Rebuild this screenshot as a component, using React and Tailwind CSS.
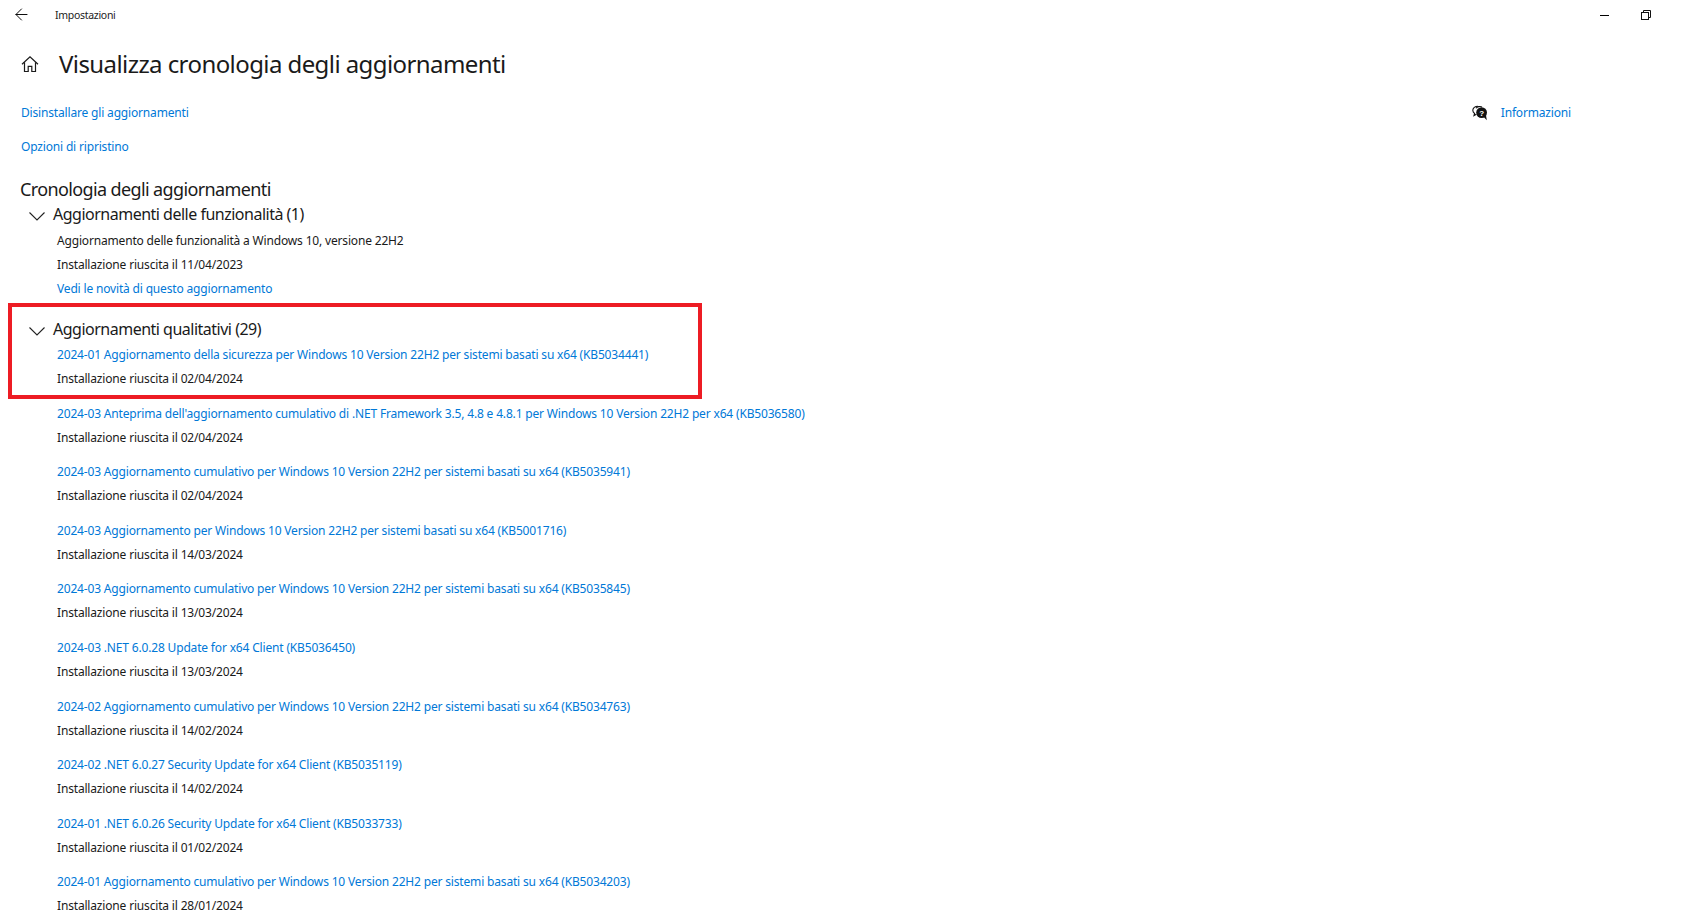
import { ArrowLeft } from "lucide-react";

const updates = [
  ["2024-01 Aggiornamento della sicurezza per Windows 10 Version 22H2 per sistemi basati su x64 (KB5034441)", "02/04/2024"],
  ["2024-03 Anteprima dell'aggiornamento cumulativo di .NET Framework 3.5, 4.8 e 4.8.1 per Windows 10 Version 22H2 per x64 (KB5036580)", "02/04/2024"],
  ["2024-03 Aggiornamento cumulativo per Windows 10 Version 22H2 per sistemi basati su x64 (KB5035941)", "02/04/2024"],
  ["2024-03 Aggiornamento per Windows 10 Version 22H2 per sistemi basati su x64 (KB5001716)", "14/03/2024"],
  ["2024-03 Aggiornamento cumulativo per Windows 10 Version 22H2 per sistemi basati su x64 (KB5035845)", "13/03/2024"],
  ["2024-03 .NET 6.0.28 Update for x64 Client (KB5036450)", "13/03/2024"],
  ["2024-02 Aggiornamento cumulativo per Windows 10 Version 22H2 per sistemi basati su x64 (KB5034763)", "14/02/2024"],
  ["2024-02 .NET 6.0.27 Security Update for x64 Client (KB5035119)", "14/02/2024"],
  ["2024-01 .NET 6.0.26 Security Update for x64 Client (KB5033733)", "01/02/2024"],
  ["2024-01 Aggiornamento cumulativo per Windows 10 Version 22H2 per sistemi basati su x64 (KB5034203)", "28/01/2024"],
];

function HomeIcon() {
  return (
    <svg width="18" height="18" viewBox="0 0 18 18" fill="none" stroke="#1a1a1a" strokeWidth="1.2">
      <path d="M1 9.2 9 1.8l8 7.4" />
      <path d="M3.5 7.2V16.5h3.7v-5.2h3.6v5.2h3.7V7.2" />
    </svg>
  );
}

function ChatHelpIcon() {
  return (
    <svg width="16" height="16" viewBox="0 0 16 16">
      <path d="M6 1.2C3 1.2.8 3 .8 5.3c0 1.3.7 2.4 1.8 3.2L2 10.6l2.4-1.4" fill="none" stroke="#111" strokeWidth="1.1" />
      <path d="M4 3.2C5 1.8 8 .8 10 2" fill="none" stroke="#111" strokeWidth="1.1" />
      <circle cx="9.6" cy="7.6" r="5.4" fill="#111" />
      <path d="m11.5 11.8 3.3 3.4-.8-5z" fill="#111" />
      <text x="9.6" y="10.6" textAnchor="middle" fontSize="8" fontWeight="700" fill="#fff" fontFamily="Liberation Sans, sans-serif">?</text>
    </svg>
  );
}

function RestoreIcon() {
  return (
    <svg width="10" height="10" viewBox="0 0 10 10" fill="none" stroke="#111" strokeWidth="1">
      <rect x="0.5" y="2.5" width="7" height="7" />
      <path d="M2.5 2.5v-2h7v7h-2" />
    </svg>
  );
}

function Chevron() {
  return (
    <svg width="16" height="9" viewBox="0 0 16 9" fill="none" stroke="#222" strokeWidth="1.1" className="mt-[4px] mr-[8px]">
      <path d="M.5.5 8 8l7.500-7.500" />
    </svg>
  );
}

function GroupHeader({ children, className }) {
  return (
    <div className={`flex items-center h-6 pl-[29px] ${className}`}>
      <Chevron />
      <span className="text-[16px] tracking-[-0.5px] text-[#1a1a1a]">{children}</span>
    </div>
  );
}

export default function App() {
  return (
    <div className="relative h-[919px] overflow-hidden bg-white text-black font-['Noto_Sans',sans-serif]">
      {/* Title bar */}
      <div className="flex items-center h-[30px] pl-[12px] pr-[32px]">
        <ArrowLeft className="w-[19px] h-[19px] mb-[2px] text-black" strokeWidth={1.2} />
        <span className="ml-[24px] mt-[1px] text-[10.500px] tracking-[-0.3px] text-[#222]">Impostazioni</span>
        <div className="ml-auto flex items-center gap-[32px]">
          <div className="w-[9px] h-px bg-black" />
          <RestoreIcon />
        </div>
      </div>

      {/* Page heading */}
      <div className="flex items-center h-[36px] mt-[16px] pl-[21px]">
        <HomeIcon />
        <h1 className="ml-[20px] text-[24px] tracking-[-0.58px] text-[#1a1a1a]">Visualizza cronologia degli aggiornamenti</h1>
      </div>

      {/* Links */}
      <div className="flex items-center justify-between h-5 mt-[20.500px] pl-[21px] pr-[112px]">
        <a className="text-[12px] tracking-[-0.17px] text-[#0078d7]">Disinstallare gli aggiornamenti</a>
        <div className="flex items-center gap-[13px]">
          <ChatHelpIcon />
          <a className="text-[12px] tracking-[-0.17px] text-[#0078d7]">Informazioni</a>
        </div>
      </div>
      <div className="h-5 mt-[12px] pl-[21px] leading-5">
        <a className="text-[12px] tracking-[-0.17px] text-[#0078d7]">Opzioni di ripristino</a>
      </div>

      <h2 className="mt-[22px] pl-[20px] h-6 leading-6 text-[18px] tracking-[-0.62px] text-[#1a1a1a]">Cronologia degli aggiornamenti</h2>

      <GroupHeader className="mt-[1.500px]">Aggiornamenti delle funzionalità (1)</GroupHeader>
      <div className="pl-[57px] text-[12px] tracking-[-0.17px] leading-[24px] text-[#1a1a1a] mt-[3px]">
        <p>Aggiornamento delle funzionalità a Windows 10, versione 22H2</p>
        <p>Installazione riuscita il 11/04/2023</p>
        <a className="block text-[#0078d7]">Vedi le novità di questo aggiornamento</a>
      </div>

      <GroupHeader className="mt-[16px]">Aggiornamenti qualitativi (29)</GroupHeader>
      <div className="pl-[57px] text-[12px] tracking-[-0.17px] leading-[24px] text-[#1a1a1a] mt-[2px] flex flex-col gap-[10.6px]">
        {updates.map(([name, date]) => (
          <div key={name}>
            <a className="block text-[#0078d7]">{name}</a>
            <p>Installazione riuscita il {date}</p>
          </div>
        ))}
      </div>

      {/* Red highlight drawn over the screenshot */}
      <div className="absolute left-[8px] top-[303px] w-[694px] h-[96px] border-[4px] border-[#ed1c24]" />
    </div>
  );
}
